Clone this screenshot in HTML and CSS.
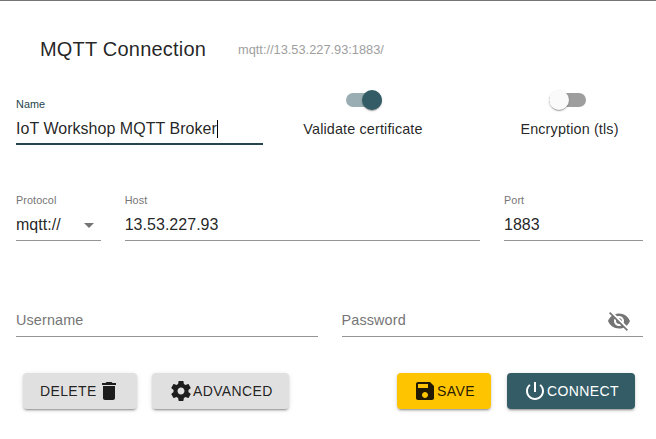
FILE: index.html
```html
<!DOCTYPE html>
<html lang="en">
<head>
<meta charset="utf-8">
<title>MQTT Connection</title>
<link rel="stylesheet" href="styles.css">
</head>
<body>
<main class="panel">
  <header class="header">
    <h1 class="title">MQTT Connection</h1>
    <span class="url">mqtt://13.53.227.93:1883/</span>
  </header>
  <section class="row row-name">
    <div class="field focused">
      <span class="label">Name</span>
      <span class="value">IoT Workshop MQTT Broker<i class="caret"></i></span>
    </div>
    <div class="toggle on"><span class="switch"><i class="thumb"></i></span><span class="toggle-label">Validate certificate</span></div>
    <div class="toggle"><span class="switch"><i class="thumb"></i></span><span class="toggle-label">Encryption (tls)</span></div>
  </section>
  <section class="row row-host">
    <div class="field">
      <span class="label">Protocol</span>
      <span class="value">mqtt://<svg class="arrow" viewBox="0 0 10 5"><path d="M0 0h10L5 5z"/></svg></span>
    </div>
    <div class="field"><span class="label">Host</span><span class="value">13.53.227.93</span></div>
    <div class="field"><span class="label">Port</span><span class="value">1883</span></div>
  </section>
  <section class="row row-user">
    <div class="field"><span class="label"></span><span class="value placeholder">Username</span></div>
    <div class="field">
      <span class="label"></span>
      <span class="value placeholder">Password<svg class="icon eye" viewBox="0 0 24 24"><path d="M12 7c2.76 0 5 2.24 5 5 0 .65-.13 1.26-.36 1.83l2.92 2.92c1.51-1.26 2.7-2.89 3.43-4.75-1.73-4.39-6-7.5-11-7.5-1.4 0-2.74.25-3.98.7l2.16 2.16C10.74 7.13 11.35 7 12 7zM2 4.27l2.28 2.28.46.46C3.08 8.3 1.78 10.02 1 12c1.73 4.39 6 7.5 11 7.5 1.55 0 3.03-.3 4.38-.84l.42.42L19.73 22 21 20.73 3.27 3 2 4.27zM7.53 9.8l1.55 1.55c-.05.21-.08.43-.08.65 0 1.66 1.34 3 3 3 .22 0 .44-.03.65-.08l1.55 1.55c-.67.33-1.41.53-2.2.53-2.76 0-5-2.24-5-5 0-.79.2-1.53.53-2.2zm4.31-.78l3.15 3.15.02-.16c0-1.66-1.34-3-3-3l-.17.01z"/></svg></span>
    </div>
  </section>
  <footer class="actions">
    <button class="btn delete">DELETE<svg class="icon" viewBox="0 0 24 24"><path d="M6 19c0 1.1.9 2 2 2h8c1.1 0 2-.9 2-2V7H6v12zM19 4h-3.5l-1-1h-5l-1 1H5v2h14V4z"/></svg></button>
    <button class="btn advanced"><svg class="icon" viewBox="0 0 24 24"><path d="M19.43 12.98c.04-.32.07-.64.07-.98s-.03-.66-.07-.98l2.11-1.65c.19-.15.24-.42.12-.64l-2-3.46c-.12-.22-.39-.3-.61-.22l-2.49 1c-.52-.4-1.08-.73-1.69-.98l-.38-2.65C14.46 2.18 14.25 2 14 2h-4c-.25 0-.46.18-.49.42l-.38 2.65c-.61.25-1.17.59-1.69.98l-2.49-1c-.23-.09-.49 0-.61.22l-2 3.46c-.13.22-.07.49.12.64l2.11 1.65c-.04.32-.07.65-.07.98s.03.66.07.98l-2.11 1.65c-.19.15-.24.42-.12.64l2 3.46c.12.22.39.3.61.22l2.49-1c.52.4 1.08.73 1.69.98l.38 2.65c.03.24.24.42.49.42h4c.25 0 .46-.18.49-.42l.38-2.65c.61-.25 1.17-.59 1.69-.98l2.49 1c.23.09.49 0 .61-.22l2-3.46c.12-.22.07-.49-.12-.64l-2.11-1.65zM12 15.5c-1.93 0-3.5-1.57-3.5-3.5s1.57-3.5 3.5-3.5 3.5 1.57 3.5 3.5-1.57 3.5-3.5 3.5z"/></svg>ADVANCED</button>
    <button class="btn save"><svg class="icon" viewBox="0 0 24 24"><path d="M17 3H5c-1.11 0-2 .9-2 2v14c0 1.1.89 2 2 2h14c1.1 0 2-.9 2-2V7l-4-4zm-5 16c-1.66 0-3-1.34-3-3s1.34-3 3-3 3 1.34 3 3-1.34 3-3 3zm3-10H5V5h10v4z"/></svg>SAVE</button>
    <button class="btn connect"><svg class="icon" viewBox="0 0 24 24"><path d="M13 3h-2v10h2V3zm4.83 2.17l-1.42 1.42C17.99 7.86 19 9.81 19 12c0 3.87-3.13 7-7 7s-7-3.13-7-7c0-2.19 1.01-4.14 2.58-5.42L6.17 5.17C4.23 6.82 3 9.26 3 12c0 4.97 4.03 9 9 9s9-4.03 9-9c0-2.74-1.23-5.18-3.17-6.83z"/></svg>CONNECT</button>
  </footer>
</main>
</body>
</html>
```
FILE: styles.css
```css
* { box-sizing: border-box; }
body {
  margin: 0;
  height: 439px;
  overflow: hidden;
  background: #fff;
  color: rgba(0, 0, 0, .87);
  font-family: "Liberation Sans", Arial, sans-serif;
}
.panel {
  height: 439px;
  padding: 0 13px 0 16px;
  border-top: 1px solid #757575;
}
.header {
  display: flex;
  align-items: center;
  height: 96px;
  padding-left: 24px;
}
.title {
  margin: 0 32px 0 0;
  font-size: 20px;
  font-weight: 400;
  line-height: 32px;
  letter-spacing: .2px;
}
.url {
  color: #9e9e9e;
  font-size: 12.8px;
}
.row { display: grid; height: 96px; align-items: start; }
.row-name { grid-template-columns: 247px 200px 213px; }
.row-host { grid-template-columns: 84.7px 355.3px 139px; column-gap: 24px; }
.row-user { grid-template-columns: 301.5px 301.5px; column-gap: 24px; height: 84px; }
.field {
  height: 48px;
  border-bottom: 1px solid #949494;
}
.focused { border-bottom: 2px solid #25444c; }
.label {
  display: block;
  height: 14px;
  color: #757575;
  font-size: 10.8px;
  line-height: 14px;
  letter-spacing: .1px;
}
.focused .label { color: #25444c; }
.value {
  display: flex;
  align-items: center;
  height: 34px;
  padding-top: 2px;
  font-size: 16px;
  letter-spacing: .03px;
}
.caret { width: 1px; height: 18px; background: #000; }
.arrow { width: 10px; height: 5px; margin: 0 7px 0 auto; fill: #757575; }
.placeholder { padding-top: 0; color: #757575; font-size: 14.4px; letter-spacing: .14px; }
.icon { width: 24px; height: 24px; flex: none; fill: currentColor; }
.eye { margin: 2px 12px 0 auto; }
.toggle {
  display: flex;
  flex-direction: column;
  align-items: center;
  padding-top: 3px;
}
.switch {
  position: relative;
  width: 37px;
  height: 14px;
  margin: -7px 0 12px -4px;
  border-radius: 7px;
  background: #9e9e9e;
}
.on .switch { width: 36px; margin-left: 2px; background: #99adb2; }
.thumb {
  position: absolute;
  top: -3px;
  left: 0;
  width: 20px;
  height: 20px;
  border-radius: 50%;
  background: #fafafa;
  box-shadow: 0 2px 1px -1px rgba(0,0,0,.2), 0 1px 1px rgba(0,0,0,.14), 0 1px 3px rgba(0,0,0,.12);
}
.on .thumb { left: 16px; background: #335c66; }
.toggle-label { font-size: 14.4px; line-height: 20px; letter-spacing: .14px; }
.actions { display: flex; padding-left: 7.4px; }
.btn {
  display: flex;
  align-items: center;
  height: 36px;
  padding: 0 16px;
  border: 0;
  border-radius: 4px;
  background: #e0e0e0;
  color: rgba(0, 0, 0, .87);
  font: 14px "Liberation Sans", Arial, sans-serif;
  letter-spacing: .4px;
  box-shadow: 0 3px 1px -2px rgba(0,0,0,.2), 0 2px 2px rgba(0,0,0,.14), 0 1px 5px rgba(0,0,0,.12);
}
.delete { width: 114px; padding-left: 16.5px; }
.advanced { width: 137px; margin-left: 15px; padding-left: 16.5px; }
.save { width: 94px; margin-left: auto; background: #ffc400; }
.connect { width: 128px; margin: 0 8px 0 16px; background: #335c66; color: #fff; }
```
